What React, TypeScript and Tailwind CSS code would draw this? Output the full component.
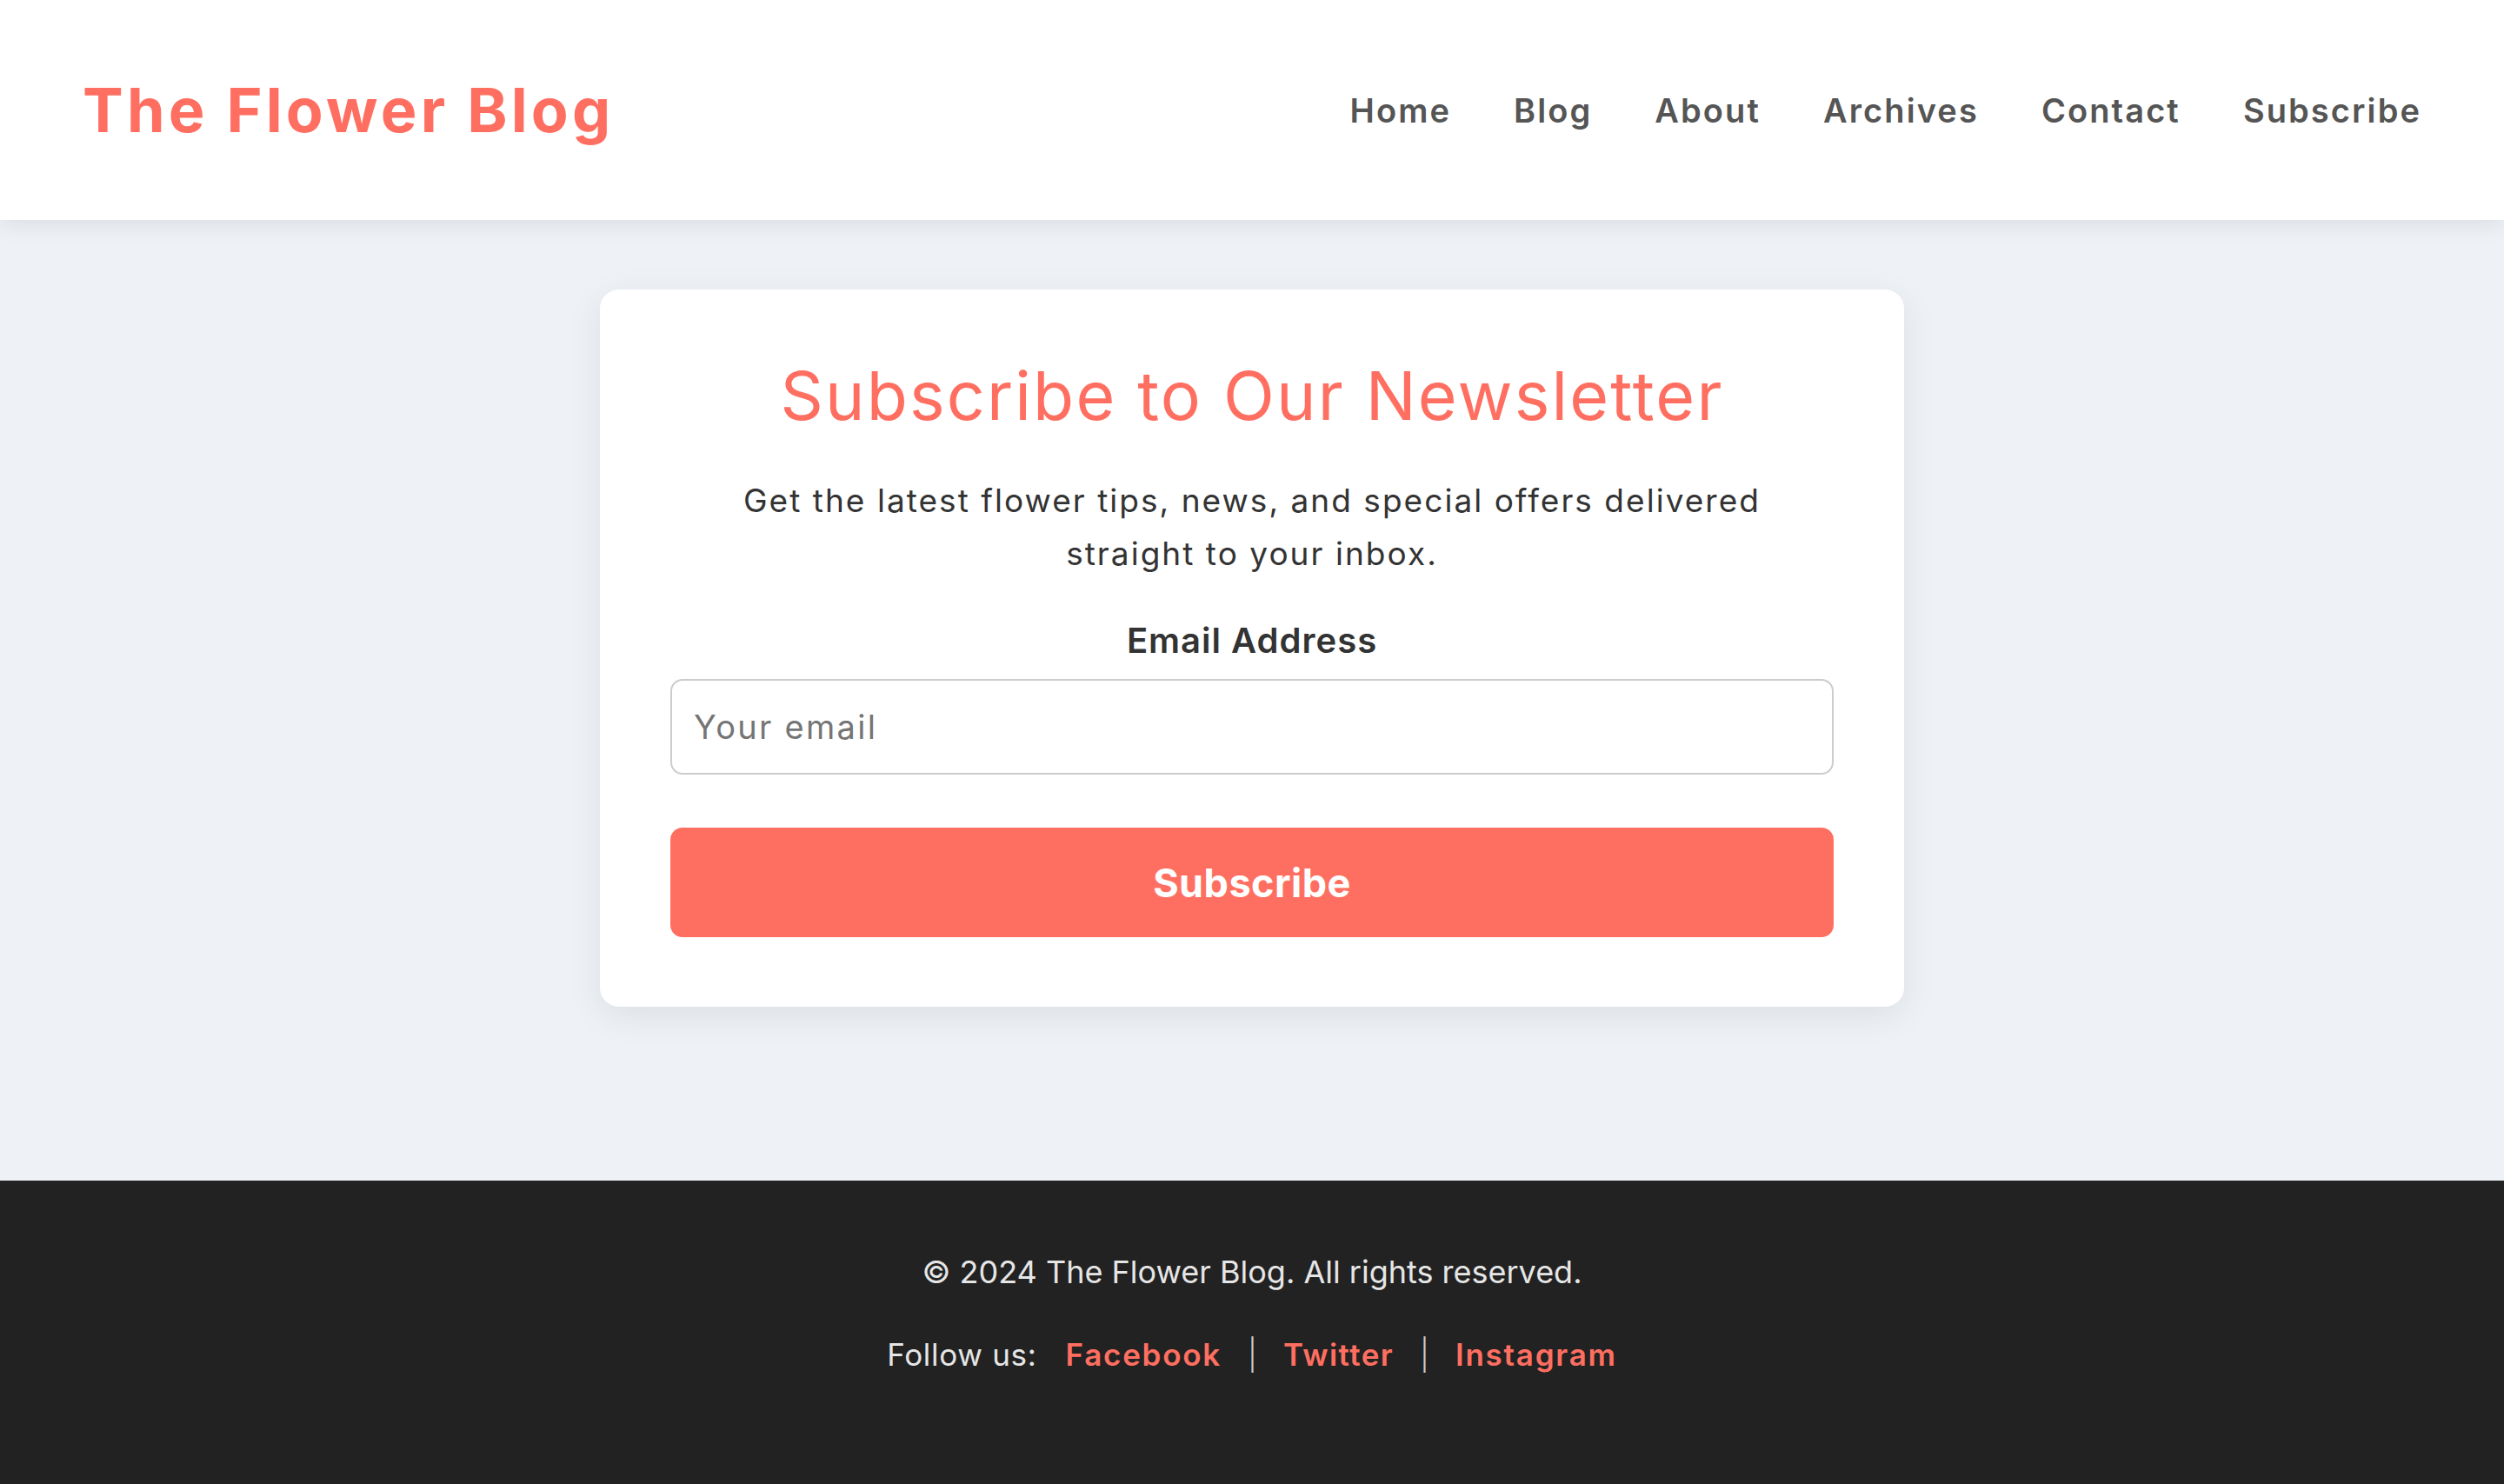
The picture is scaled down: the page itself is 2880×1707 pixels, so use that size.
const navLinks = ['Home', 'Blog', 'About', 'Archives', 'Contact', 'Subscribe'];

function Header() {
  return (
    <header className="relative z-10 flex h-[253px] items-center justify-between bg-white px-[95px] shadow-[0_6px_24px_rgba(0,0,0,0.08)]">
      <a href="#" className="text-[70px] leading-none font-bold tracking-[0.06em] text-[#ff6f61]">
        The Flower Blog
      </a>
      <nav className="flex items-center gap-[72px]">
        {navLinks.map((link) => (
          <a key={link} href="#" className="text-[38px] leading-none font-semibold tracking-[0.055em] text-[#555555]">
            {link}
          </a>
        ))}
      </nav>
    </header>
  );
}

function NewsletterCard() {
  return (
    <div className="mx-auto w-[1500px] rounded-[22px] bg-white px-[81px] pt-[76px] pb-[80px] text-center shadow-[0_10px_40px_rgba(0,0,0,0.08)]">
      <h1 className="text-[77px] leading-[1.2] font-normal tracking-[0.028em] text-[#ff6f61]">
        Subscribe to Our Newsletter
      </h1>
      <p className="mx-auto mt-[44px] max-w-[1200px] text-[37px] leading-[61px] tracking-[0.055em] text-[#333333]">
        Get the latest flower tips, news, and special offers delivered straight to your inbox.
      </p>
      <form className="mt-[46px]" onSubmit={(e) => e.preventDefault()}>
        <label htmlFor="email" className="block text-[40px] leading-[48px] font-semibold tracking-[0.025em] text-[#333333]">
          Email Address
        </label>
        <input
          id="email"
          type="email"
          placeholder="Your email"
          className="mt-[20px] block h-[110px] w-full rounded-[14px] border-2 border-[#cccccc] px-[25px] text-[38px] tracking-[0.06em] text-[#333333] placeholder:text-[#757575] focus:outline-none"
        />
        <button
          type="submit"
          className="mt-[61px] block h-[126px] w-full rounded-[14px] bg-[#ff6f61] text-[45px] font-bold tracking-[0.01em] text-white"
        >
          Subscribe
        </button>
      </form>
    </div>
  );
}

function Footer() {
  return (
    <footer className="bg-[#222222] pt-[78px] pb-[122px] text-center text-[#e6e6e6]">
      <p className="text-[36px] leading-[54px]">© 2024 The Flower Blog. All rights reserved.</p>
      <p className="mt-[41px] text-[35px] leading-[54px]">
        <span className="tracking-[0.02em]">Follow us:</span>
        <a href="#" className="ml-[33px] font-semibold tracking-[0.05em] text-[#ff6f61]">Facebook</a>
        <span className="mx-[30px] font-light text-[#cccccc]">|</span>
        <a href="#" className="font-semibold tracking-[0.04em] text-[#ff6f61]">Twitter</a>
        <span className="mx-[30px] font-light text-[#cccccc]">|</span>
        <a href="#" className="font-semibold tracking-[0.05em] text-[#ff6f61]">Instagram</a>
      </p>
    </footer>
  );
}

export default function App() {
  return (
    <div className="flex min-h-screen flex-col bg-[#eef2f7] font-['Inter',sans-serif]">
      <Header />
      <main className="flex-1 pt-[80px] pb-[200px]">
        <NewsletterCard />
      </main>
      <Footer />
    </div>
  );
}
